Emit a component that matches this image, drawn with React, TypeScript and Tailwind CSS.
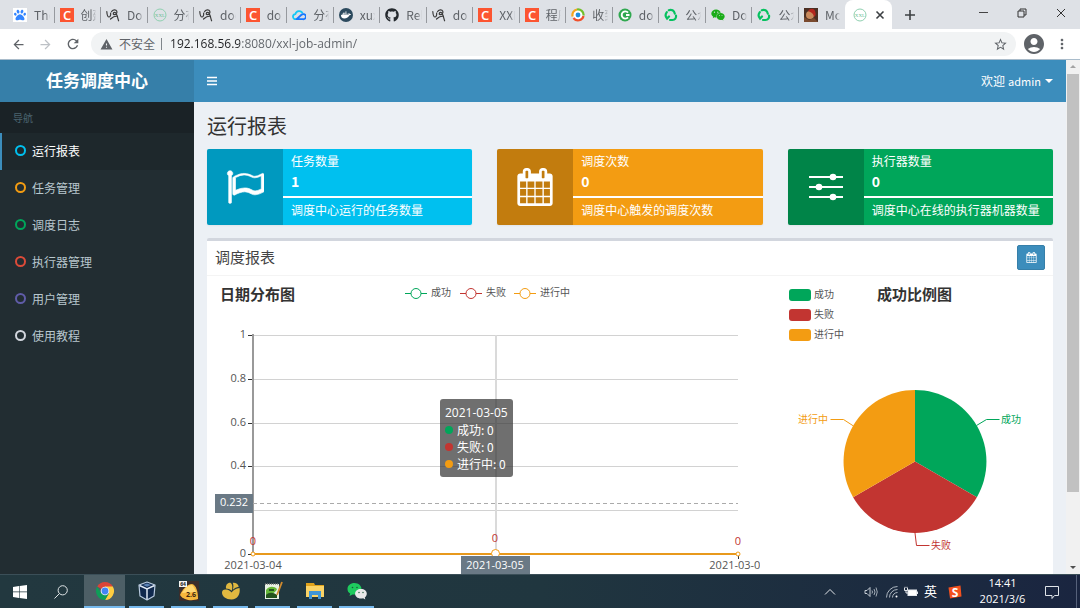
import type { ReactNode } from "react";
import { FaDocker, FaGithub, FaPaw, FaWeixin } from "react-icons/fa";
import { MdAccountCircle, MdArrowBack, MdArrowForward, MdMoreVert, MdRefresh, MdStarBorder, MdWarning } from "react-icons/md";

const GREEN = "#00a65a";
const RED = "#c23531";
const ORANGE = "#f39c12";

/* ---------- favicons ---------- */

function CIcon() {
	return (
		<svg viewBox="0 0 14 14" className="size-3.5">
			<rect width="14" height="14" fill="#fc5531" />
			<text x="7" y="11.500" textAnchor="middle" fontSize="13" fontWeight="600" fill="#fff" fontFamily="Open Sans, sans-serif">
				C
			</text>
		</svg>
	);
}

function BaiduIcon() {
	return (
		<span className="flex size-3.5 items-center justify-center bg-white">
			<FaPaw className="size-3 text-[#3385ff]" />
		</span>
	);
}

function ScriptIcon() {
	return (
		<svg viewBox="0 0 14 14" className="size-3.5" fill="none" stroke="#3c3c3c" strokeWidth="1.200" strokeLinecap="round">
			<path d="M.800 3.500c.2 3 1 5.500 2.200 5.500S5 7 4.600 5" />
			<path d="M5.500 3.800C6.500 1.500 10 1.200 10.800 3.200c.6 2-1 3.800-2.800 3.400-1.400-.5-.8-2.200.6-2.200 2.200 0 2.600 4 4 8.400M4.500 11c2-2 4.500-3 7-3" />
		</svg>
	);
}

function XxlIcon() {
	return (
		<svg viewBox="0 0 14 14" className="size-3.5">
			<circle cx="7" cy="7" r="6" fill="none" stroke="#8fd0b0" />
			<text x="7" y="8.800" textAnchor="middle" fontSize="5" fill="#6fbf98" fontFamily="Liberation Serif, serif">
				XXL
			</text>
		</svg>
	);
}

function CloudIcon() {
	return (
		<svg viewBox="0 0 14 14" className="size-3.5" fill="none" strokeWidth="1.800" strokeLinejoin="round">
			<path d="M4.500 11.200H3.600a2.500 2.500 0 0 1-.2-5A3.800 3.800 0 0 1 10.700 5.500" stroke="#16c8f5" />
			<path d="M4.500 11.200l5-4.400a2.600 2.600 0 1 1 1.300 4.400z" stroke="#1a78ff" />
		</svg>
	);
}

function DockerIcon() {
	return (
		<span className="flex size-3.5 items-center justify-center rounded-full bg-[#2c4a5e]">
			<FaDocker className="size-2.5 text-white" />
		</span>
	);
}

function SwirlIcon() {
	return (
		<svg viewBox="0 0 14 14" className="size-3.5" fill="none" strokeWidth="2.200">
			<circle cx="7" cy="7" r="5" fill="#fff" />
			<path d="M1.600 8.500A5.600 5.600 0 0 1 6 1.500" stroke="#f7a51c" />
			<path d="M6 1.500a5.600 5.600 0 0 1 6.600 6" stroke="#72bf2c" />
			<path d="M12.500 8a5.600 5.600 0 0 1-10 2" stroke="#f0502c" />
			<circle cx="7" cy="7" r="2.400" fill="#1f8fe0" />
		</svg>
	);
}

function GreenCIcon() {
	return (
		<svg viewBox="0 0 14 14" className="size-3.5">
			<circle cx="7" cy="7" r="6.500" fill="#2fa84f" />
			<path d="M10 4.600A3.600 3.600 0 1 0 10 9.400M8 7h3.500" fill="none" stroke="#fff" strokeWidth="1.900" />
		</svg>
	);
}

function RecycleIcon() {
	return (
		<svg viewBox="0 0 14 14" className="size-3.5" fill="none" stroke="#07c160" strokeWidth="2.200" strokeLinecap="round">
			<path d="M4.800 2.200C7.500 1 10.200 2.600 10.800 5.600" />
			<path d="M12 7.500c.5 2.500-1 4.500-3.500 4.500H6" />
			<path d="M2.800 4.200c-1.500 2-1.500 4.500.2 6.400L5 8.500" />
		</svg>
	);
}

function PortraitIcon() {
	return (
		<svg viewBox="0 0 14 14" className="size-3.5">
			<rect width="14" height="14" fill="#4b3024" />
			<circle cx="6" cy="7" r="4" fill="#c98a5c" />
			<path d="M4 3c2-3 6-3 7 0s1 5-1 6C10 6 7 4 4 3z" fill="#b3261e" />
			<path d="M0 14V9l5 3 5-2 4 4z" fill="#7a4a2e" />
		</svg>
	);
}

const tabs: { title: string; icon: ReactNode }[] = [
	{ title: "The", icon: <BaiduIcon /> },
	{ title: "创建", icon: <CIcon /> },
	{ title: "Doc", icon: <ScriptIcon /> },
	{ title: "分布", icon: <XxlIcon /> },
	{ title: "doc", icon: <ScriptIcon /> },
	{ title: "doc", icon: <CIcon /> },
	{ title: "分布", icon: <CloudIcon /> },
	{ title: "xux", icon: <DockerIcon /> },
	{ title: "Rel", icon: <FaGithub className="size-3.5 text-[#24292e]" /> },
	{ title: "doc", icon: <ScriptIcon /> },
	{ title: "XXL", icon: <CIcon /> },
	{ title: "程序", icon: <CIcon /> },
	{ title: "收到", icon: <SwirlIcon /> },
	{ title: "doc", icon: <GreenCIcon /> },
	{ title: "公众", icon: <RecycleIcon /> },
	{ title: "Doc", icon: <FaWeixin className="size-3.5 text-[#1aad19]" /> },
	{ title: "公众", icon: <RecycleIcon /> },
	{ title: "Mo", icon: <PortraitIcon /> },
];

/* ---------- browser chrome ---------- */

function TabStrip() {
	return (
		<div className="flex h-[29px] shrink-0 bg-[#dee1e6] pl-2">
			<div className="grid min-w-0 flex-1 grid-cols-19">
				{tabs.map((tab, i) => (
					<button key={i} type="button" className="flex min-w-0 items-center pl-[5px] text-xs text-[#5f6368]">
						<span className="shrink-0">{tab.icon}</span>
						<span className="ml-[7px] min-w-0 flex-1 overflow-hidden text-left whitespace-nowrap mask-r-from-70%">{tab.title}</span>
						<span className={i === tabs.length - 1 ? "ml-1 h-4 w-px" : "ml-1 h-4 w-px bg-[#96999e]"} />
					</button>
				))}
				<div className="flex min-w-0 items-center justify-center gap-2 rounded-t-lg bg-white">
					<XxlIcon />
					<button type="button" aria-label="关闭标签页">
						<svg viewBox="0 0 10 10" className="size-2.5" stroke="#3c4043" strokeWidth="1.600">
							<path d="M1.500 1.500l7 7M8.500 1.500l-7 7" />
						</svg>
					</button>
				</div>
			</div>
			<div className="flex w-[188px] shrink-0 items-center">
				<button type="button" aria-label="新标签页" className="flex w-9 justify-center">
					<svg viewBox="0 0 12 12" className="size-3" stroke="#3c4043" strokeWidth="1.600">
						<path d="M6 1v10M1 6h10" />
					</svg>
				</button>
				<div className="ml-auto flex pb-1">
					<button type="button" aria-label="最小化" className="flex w-[39px] justify-center">
						<svg viewBox="0 0 10 10" className="size-2.5" stroke="#444">
							<path d="M1 4.500h9" />
						</svg>
					</button>
					<button type="button" aria-label="还原" className="flex w-[39px] justify-center">
						<svg viewBox="0 0 10 10" className="size-2.5" stroke="#333" fill="none">
							<path d="M1 3h6v6H1zM3 3V1h6v6H7" />
						</svg>
					</button>
					<button type="button" aria-label="关闭" className="flex w-[39px] justify-center">
						<svg viewBox="0 0 10 10" className="size-2.5" stroke="#333">
							<path d="M1 1l8 8M9 1L1 9" />
						</svg>
					</button>
				</div>
			</div>
		</div>
	);
}

function Toolbar() {
	return (
		<div className="flex h-[31px] shrink-0 items-center border-b border-[#a9bccb] bg-white pr-2.5 pl-[11px] text-[#5f6368]">
			<button type="button" aria-label="后退">
				<MdArrowBack className="size-[15px]" />
			</button>
			<button type="button" aria-label="前进" className="ml-3 text-[#bdc1c6]">
				<MdArrowForward className="size-[15px]" />
			</button>
			<button type="button" aria-label="刷新" className="ml-3">
				<MdRefresh className="size-4" />
			</button>
			<div className="ml-2.5 flex h-6 min-w-0 flex-1 items-center rounded-full bg-[#f1f3f4] pr-2 pl-[9px]">
				<MdWarning className="size-[13px] shrink-0" />
				<span className="ml-1.5 shrink-0 text-xs">不安全</span>
				<span className="ml-1.5 h-3 w-px shrink-0 bg-[#80868b]" />
				<input
					type="text"
					aria-label="地址"
					defaultValue="192.168.56.9:8080/xxl-job-admin/"
					className="ml-2 min-w-0 flex-1 bg-linear-to-r from-[#202124] from-[70px] to-[#5f6368] to-[70px] bg-clip-text font-[Open_Sans,sans-serif] text-xs text-transparent outline-none"
				/>
				<MdStarBorder className="size-[15px] shrink-0" />
			</div>
			<MdAccountCircle className="ml-1.5 size-6" />
			<button type="button" aria-label="菜单" className="ml-2">
				<MdMoreVert className="size-4" />
			</button>
		</div>
	);
}

/* ---------- admin page ---------- */

const menu = [
	{ title: "运行报表", ring: "border-[#00c0ef]", active: true },
	{ title: "任务管理", ring: "border-[#f39c12]" },
	{ title: "调度日志", ring: "border-[#00a65a]" },
	{ title: "执行器管理", ring: "border-[#dd4b39]" },
	{ title: "用户管理", ring: "border-[#605ca8]" },
	{ title: "使用教程", ring: "border-[#d2d6de]" },
];

function Sidebar() {
	return (
		<aside className="w-[194px] shrink-0 bg-[#222d32]">
			<a href="#" className="flex h-[42px] items-center justify-center bg-[#367fa9] pb-0.5 text-[17px] font-bold text-white">
				任务调度中心
			</a>
			<div className="flex h-[31px] items-center bg-[#1a2226] pl-[13px] text-[10px] text-[#4b646f]">导航</div>
			<nav>
				{menu.map((item) => (
					<a
						key={item.title}
						href="#"
						className={
							item.active
								? "flex h-[37px] items-center gap-1.5 border-l-2 border-[#3c8dbc] bg-[#1e282c] pb-0.5 pl-[13px] text-xs text-white"
								: "flex h-[37px] items-center gap-1.5 border-l-2 border-transparent pb-0.5 pl-[13px] text-xs text-[#b8c7ce]"
						}
					>
						<span className={`size-[11px] rounded-full border-2 ${item.ring}`} />
						{item.title}
					</a>
				))}
			</nav>
		</aside>
	);
}

function CalendarIcon({ className }: { className: string }) {
	return (
		<svg viewBox="0 0 1792 1792" fill="currentColor" className={className}>
			<path d="M192 1664h288v-288h-288v288zM544 1664h320v-288h-320v288zM192 1312h288v-320h-288v320zM544 1312h320v-320h-320v320zM192 928h288v-288h-288v288zM928 1664h320v-288h-320v288zM544 928h320v-288h-320v288zM1312 1664h288v-288h-288v288zM928 1312h320v-320h-320v320zM576 448v-288q0-13-9.500-22.500t-22.500-9.500h-64q-13 0-22.500 9.500t-9.500 22.500v288q0 13 9.500 22.500t22.500 9.500h64q13 0 22.500-9.500t9.500-22.500zM1312 1312h288v-320h-288v320zM928 928h320v-288h-320v288zM1312 928h288v-288h-288v288zM1344 448v-288q0-13-9.500-22.500t-22.500-9.500h-64q-13 0-22.500 9.500t-9.500 22.500v288q0 13 9.500 22.500t22.500 9.500h64q13 0 22.500-9.500t9.500-22.500zM1728 384v1280q0 52-38 90t-90 38h-1408q-52 0-90-38t-38-90v-1280q0-52 38-90t90-38h128v-96q0-66 47-113t113-47h64q66 0 113 47t47 113v96h384v-96q0-66 47-113t113-47h64q66 0 113 47t47 113v96h128q52 0 90 38t38 90z" />
		</svg>
	);
}

function FlagIcon() {
	return (
		<svg viewBox="0 0 1792 1792" fill="currentColor" stroke="currentColor" strokeWidth="30" className="size-[38px]">
			<path d="M1664 987v-616q-169 91-306 91-82 0-145-32-100-49-184-76.500t-178-27.500q-173 0-403 127v599q245-113 433-113 55 0 103.500 7.500t98 26 77 31 82.500 39.500l28 14q44 22 101 22 120 0 293-92zM320 256q0 35-17.500 64t-46.500 46v1266q0 14-9 23t-23 9h-64q-14 0-23-9t-9-23v-1266q-29-17-46.500-46t-17.500-64q0-53 37.500-90.500t90.500-37.500 90.500 37.500 37.500 90.500zM1792 320v763q0 39-35 57-10 5-17 9-218 116-369 116-88 0-158-35l-28-14q-64-33-99-48t-91-29-114-14q-102 0-235.500 44t-228.500 102q-15 9-33 9-16 0-32-8-32-19-32-56v-742q0-35 31-55 35-21 78.500-42.500t114-52 152.500-49.500 155-19q112 0 209 31t209 86q38 19 89 19 122 0 310-112 22-12 31-17 31-16 62 2 31 20 31 55z" />
		</svg>
	);
}

function SlidersIcon() {
	return (
		<svg viewBox="0 0 34 28" className="h-7 w-[34px]" stroke="#fff" strokeWidth="2" fill="#fff">
			<path d="M0 4h34M0 14h34M0 24h34" />
			<g stroke="none">
				<circle cx="24" cy="4" r="3.300" />
				<circle cx="10" cy="14" r="3.300" />
				<circle cx="24" cy="24" r="3.300" />
			</g>
		</svg>
	);
}

type InfoBoxProps = { title: string; value: number; note: string; color: string; icon: ReactNode };

function InfoBox({ title, value, note, color, icon }: InfoBoxProps) {
	return (
		<div className={`flex h-[76px] overflow-hidden rounded-xs text-xs text-white shadow-xs ${color}`}>
			<div className="flex w-[76px] shrink-0 items-center justify-center bg-black/20">{icon}</div>
			<div className="min-w-0 flex-1 pt-[3px]">
				<div className="px-2 leading-[18px]">{title}</div>
				<div className="mb-1 px-2 text-sm leading-[22px] font-bold">{value}</div>
				<div className="h-0.5 bg-white" />
				<div className="px-2 leading-6 whitespace-nowrap">{note}</div>
			</div>
		</div>
	);
}

// the 0.2 line carries no label: the pointer's value badge takes its place
const yTicks = [
	{ label: "1", y: 59 },
	{ label: "0.8", y: 103 },
	{ label: "0.6", y: 147 },
	{ label: "0.4", y: 190 },
	{ label: "", y: 234 },
	{ label: "0", y: 278 },
];

const lineLegend = [
	{ label: "成功", color: GREEN, x: 190 },
	{ label: "失败", color: RED, x: 245 },
	{ label: "进行中", color: ORANGE, x: 299 },
];

const tooltipRows = [
	{ label: "成功", dot: "bg-[#00a65a]" },
	{ label: "失败", dot: "bg-[#c23531]" },
	{ label: "进行中", dot: "bg-[#f39c12]" },
];

function LineChart() {
	return (
		<div className="relative">
			<svg viewBox="0 0 545 340" className="block w-full" fontSize="10" fill="#555">
				<text x="5" y="24" fontSize="15" fontWeight="bold" fill="#333">
					日期分布图
				</text>
				{lineLegend.map((item) => (
					<g key={item.label}>
						<path d={`M${item.x} 17.500h22`} stroke={item.color} />
						<circle cx={item.x + 11} cy="17.500" r="5" fill="#fff" stroke={item.color} />
						<text x={item.x + 26} y="20">
							{item.label}
						</text>
					</g>
				))}
				{yTicks.map((tick) => (
					<g key={tick.y}>
						<path d={`M38 ${tick.y + 0.5}h485`} stroke="#d2d2d2" />
						<path d={`M33 ${tick.y + 0.5}h5`} stroke="#333" />
						{tick.label && (
							<text x="31" y={tick.y + 3} textAnchor="end" fontSize="11" className="font-[Open_Sans,sans-serif]">
								{tick.label}
							</text>
						)}
					</g>
				))}
				<path d="M38 58v222" stroke="#999" strokeWidth="2" />
				<path d="M281 59v219" stroke="#dadada" strokeWidth="2" />
				<path d="M38 227.500h485" stroke="#aaa" strokeDasharray="4 3" />
				<path d="M38 278h485" stroke="#e8991c" strokeWidth="2" />
				<path d="M523.500 278v5" stroke="#333" />
				<g fill="#fff" stroke={ORANGE}>
					<circle cx="38" cy="278" r="2" />
					<circle cx="280.500" cy="277.500" r="4" />
					<circle cx="523" cy="278" r="2" />
				</g>
				<g textAnchor="middle" fontSize="11" className="font-[Open_Sans,sans-serif]">
					<g fill={RED}>
						<text x="38" y="269">0</text>
						<text x="280" y="266">0</text>
						<text x="523" y="269">0</text>
					</g>
					<text x="38" y="293">2021-03-04</text>
					<text x="523" y="293">2021-03-06</text>
					<g fill="#6a7985">
						<rect y="218" width="38" height="19" />
						<rect x="246" y="280" width="69" height="19" />
					</g>
					<g fill="#fff">
						<text x="19" y="230">0.232</text>
						<text x="280" y="293">2021-03-05</text>
					</g>
				</g>
			</svg>
			<div className="absolute top-[123px] left-[225px] rounded-[3px] bg-[#323232]/70 px-[5px] py-[5px] text-xs leading-[17px] whitespace-nowrap text-white">
				<div className="font-[Open_Sans,sans-serif]">2021-03-05</div>
				{tooltipRows.map((row) => (
					<div key={row.label} className="flex items-center gap-1">
						<span className={`size-2 rounded-full ${row.dot}`} />
						{row.label}: 0
					</div>
				))}
			</div>
		</div>
	);
}

const pieLegend = [
	{ label: "成功", color: GREEN, y: 13 },
	{ label: "失败", color: RED, y: 33 },
	{ label: "进行中", color: ORANGE, y: 53 },
];

function PieChart() {
	return (
		<svg viewBox="0 0 285 340" className="block w-full" fontSize="10" fill="#555">
			{pieLegend.map((item) => (
				<g key={item.label}>
					<rect x="29" y={item.y} width="22" height="12" rx="3" fill={item.color} />
					<text x="54" y={item.y + 9}>
						{item.label}
					</text>
				</g>
			))}
			<text x="117" y="24" fontSize="15" fontWeight="bold" fill="#333">
				成功比例图
			</text>
			<path d="M155 185.500V114a71.500 71.500 0 0 1 61.900 107.200z" fill={GREEN} />
			<path d="M155 185.500l61.900 35.700a71.500 71.500 0 0 1-123.800 0z" fill={RED} />
			<path d="M155 185.500l-61.900 35.700A71.500 71.500 0 0 1 155 114z" fill={ORANGE} />
			<g fill="none">
				<path d="M216.500 149.500l10-6h13" stroke={GREEN} />
				<path d="M155 257l1.500 12.500h13" stroke={RED} />
				<path d="M93.500 150l-10-6.500h-13" stroke={ORANGE} />
			</g>
			<text x="241" y="147" fill={GREEN}>成功</text>
			<text x="171" y="273" fill={RED}>失败</text>
			<text x="68" y="147" textAnchor="end" fill={ORANGE}>进行中</text>
		</svg>
	);
}

function Dashboard() {
	return (
		<main className="min-w-0 flex-1 bg-[#ecf0f5]">
			<header className="flex h-[42px] items-center justify-between bg-[#3c8dbc] px-[13px] text-xs text-white">
				<button type="button" aria-label="切换导航">
					<svg viewBox="0 0 10 10" className="size-2.5" stroke="#fff" strokeWidth="1.600">
						<path d="M0 1.500h10M0 5h10M0 8.500h10" />
					</svg>
				</button>
				<button type="button" className="flex items-center">
					欢迎
					<span className="ml-[3px] text-[11px]">admin</span>
					<span className="ml-1 border-x-4 border-t-4 border-x-transparent border-t-white" />
				</button>
			</header>
			<div className="px-[13px] pt-2.5">
				<h1 className="text-xl leading-7">运行报表</h1>
				<div className="mt-[9px] grid grid-cols-3 gap-[25px]">
					<InfoBox title="任务数量" value={1} note="调度中心运行的任务数量" color="bg-[#00c0ef]" icon={<FlagIcon />} />
					<InfoBox title="调度次数" value={0} note="调度中心触发的调度次数" color="bg-[#f39c12]" icon={<CalendarIcon className="size-[38px]" />} />
					<InfoBox title="执行器数量" value={0} note="调度中心在线的执行器机器数量" color="bg-[#00a65a]" icon={<SlidersIcon />} />
				</div>
				<section className="mt-[13px] rounded-t-xs border-t-[3px] border-[#d2d6de] bg-white">
					<div className="flex h-[35px] items-center justify-between border-b border-[#f4f4f4] px-2 pb-0.5">
						<h2 className="text-[15px] text-[#444]">调度报表</h2>
						<button type="button" aria-label="选择日期" className="flex h-[25px] w-7 items-center justify-center rounded-xs border border-[#367fa9] bg-[#3c8dbc] text-white">
							<CalendarIcon className="size-[11px]" />
						</button>
					</div>
					<div className="grid grid-cols-[545fr_285fr] px-2">
						<LineChart />
						<PieChart />
					</div>
				</section>
			</div>
		</main>
	);
}

function Scrollbar() {
	return (
		<div className="flex w-3.5 shrink-0 flex-col items-center bg-[#f1f1f1] py-[5px]">
			<span className="border-x-[3px] border-b-[3px] border-x-transparent border-b-[#a3a3a3]" />
			<span className="mt-1.5 h-[83%] w-3 bg-[#c1c1c1]" />
			<span className="mt-auto border-x-[3px] border-t-[3px] border-x-transparent border-t-[#505050]" />
		</div>
	);
}

/* ---------- taskbar ---------- */

const apps: { name: string; icon: ReactNode }[] = [
	{
		name: "VirtualBox",
		icon: (
			<svg viewBox="0 0 20 20" className="size-5">
				<path d="M10 1l8 3-1 11-7 4-7-4L2 4z" fill="#10294d" stroke="#b9cbe0" strokeWidth="1.200" strokeLinejoin="round" />
				<path d="M2.500 4.500L10 8l7.500-3.500M10 8v10.500" stroke="#dfe9f5" strokeWidth="1.500" fill="none" />
				<path d="M6 4l4-1.500L14 4l-4 1.800z" fill="#5b83b5" />
			</svg>
		),
	},
	{
		name: "Cheese",
		icon: (
			<svg viewBox="0 0 20 20" className="size-5">
				<rect width="20" height="20" fill="#3b2d2b" />
				<path d="M1 14C3 9 8 3 13 3c4 1 6 7 6 15-5 2-14 2-18-4z" fill="#f6b73c" />
				<path d="M3 12c3-5 6-8 10-8 2 2 3 4 4 7z" fill="#ffd874" />
				<text x="12" y="15.500" textAnchor="middle" fontSize="7" fontWeight="bold" fill="#3b2410" fontFamily="Open Sans, sans-serif">
					2.6
				</text>
				<rect width="8" height="6" fill="#f4f4f4" />
				<text x="4" y="5" textAnchor="middle" fontSize="5" fontWeight="bold" fill="#222" fontFamily="Open Sans, sans-serif">
					64
				</text>
			</svg>
		),
	},
	{
		name: "Navicat",
		icon: (
			<svg viewBox="0 0 20 20" className="size-5" fill="#e0b840">
				<path d="M1 11.500c0-2.500 2-3.500 4.500-3 2 .3 3.500 1.200 5 3 2-2.500 4.500-4 8-4.500 1.200 6-2 11.500-8 11.500C5 18.500 1 15.500 1 11.500z" />
				<path d="M5 7.500C4.500 4 6.500 1.500 9.500 1.800c2 1.200 2.300 4.500 1.300 8C9 8.300 7 7.500 5 7.500z" />
				<path d="M11.800 1.800c3-.3 5.200 1 6 4-2.300.4-4.300 1.400-6 3 .8-2.500.8-4.800 0-7z" />
			</svg>
		),
	},
	{
		name: "Notepad++",
		icon: (
			<svg viewBox="0 0 20 20" className="size-5">
				<path d="M2 3h14v15H2z" fill="#e9f1e4" />
				<path d="M2 3h14" stroke="#777" strokeWidth="1.500" strokeDasharray="1 1" />
				<path d="M3 9c3-4 8-4 11-1-1 3-3 3-4 5s-4 4-7 2z" fill="#67b73a" />
				<path d="M3 14c3-3 7-3 11 0v3H3zM6 8h5v2H6z" fill="#24531d" />
				<path d="M19 1l-5 13" stroke="#d08a2e" strokeWidth="1.800" />
			</svg>
		),
	},
	{
		name: "文件资源管理器",
		icon: (
			<svg viewBox="0 0 20 20" className="size-5">
				<path d="M1 2h8l1 2h9v12H1z" fill="#e0a21b" />
				<path d="M1 5h18v11H1z" fill="#fbd365" />
				<path d="M4 18v-8h12v8h-3v-4H7v4z" fill="#3f94d4" />
			</svg>
		),
	},
	{
		name: "微信",
		icon: (
			<svg viewBox="0 0 20 20" className="size-5">
				<path d="M7.500 2C3.500 2 .500 4.500.500 8c0 2 1 3.500 2.700 4.500L2.500 15l3-1.500h2c4 0 7-2.300 7-5.500s-3-6-7-6z" fill="#1ecb5e" />
				<path d="M14 8c3.300 0 5.800 2 5.800 4.800 0 1.500-.8 2.800-2 3.700l.5 2-2.200-1.200c-5 1-8-1.500-8-4.500S10.700 8 14 8z" fill="#e9e9e9" />
				<g fill="#1b5b3a">
					<circle cx="5.500" cy="6.500" r=".8" />
					<circle cx="10" cy="6.500" r=".8" />
					<circle cx="12" cy="11.500" r=".7" />
					<circle cx="16" cy="11.500" r=".7" />
				</g>
			</svg>
		),
	},
];

function ChromeIcon() {
	return (
		<svg viewBox="0 0 20 20" className="size-5">
			<path d="M10 10L2.200 5.500A9 9 0 0 1 17.800 5.500z" fill="#db4437" />
			<path d="M10 10V5.500h7.800A9 9 0 0 1 10 19l4-7z" fill="#ffcd40" />
			<path d="M10 10l4 2.300L10 19A9 9 0 0 1 2.200 5.500l4 6.500z" fill="#0f9d58" />
			<circle cx="10" cy="10" r="4.300" fill="#f1f1f1" />
			<circle cx="10" cy="10" r="3.400" fill="#4285f4" />
		</svg>
	);
}

function Taskbar() {
	return (
		<footer className="flex h-[34px] shrink-0 items-stretch border-t border-[#3b4f58] bg-linear-to-r from-[#22383f] via-[#20363f] to-[#1a2540] text-white">
			<button type="button" aria-label="开始" className="flex w-10 items-center justify-center">
				<svg viewBox="0 0 14 14" className="size-3.5" fill="#fff">
					<path d="M0 2l6-1v5.600H0zM6.600.900L14 0v6.600H6.600zM0 7.300h6V13l-6-1zM6.600 7.300H14V14l-7.400-1z" />
				</svg>
			</button>
			<button type="button" aria-label="搜索" className="mr-0.5 flex w-[42px] items-center justify-center">
				<svg viewBox="0 0 14 14" className="size-3.5" fill="none" stroke="#dfe4e6">
					<circle cx="8.700" cy="5.300" r="4.600" />
					<path d="M5.400 8.600L.500 13.500" />
				</svg>
			</button>
			<button type="button" aria-label="Chrome" className="flex w-[41px] items-center justify-center border-b-2 border-[#76b9ed] bg-[#4d5f66]">
				<ChromeIcon />
			</button>
			<div className="ml-1 flex gap-[7px]">
				{apps.map((app) => (
					<button key={app.name} type="button" aria-label={app.name} className="flex w-[35px] items-center justify-center border-b-2 border-[#76b9ed]">
						{app.icon}
					</button>
				))}
			</div>
			<div className="ml-auto flex items-center">
				<svg viewBox="0 0 12 12" className="size-3" fill="none" stroke="#e3e6ea">
					<path d="M1 8.500l5-5 5 5" />
				</svg>
				<svg viewBox="0 0 14 12" className="ml-7 h-3 w-3.5" fill="none" stroke="#c4cbd3">
					<path d="M1 4.500h2l3-3v9l-3-3H1z" />
					<path d="M8 4.500q1 1.500 0 3M10 3q2 3 0 6M12 1.500q2.500 4.500 0 9" strokeWidth=".8" />
				</svg>
				<svg viewBox="0 0 12 12" className="ml-2 size-3" fill="none" stroke="#aeb7c0">
					<path d="M.500 11.500a11 11 0 0 1 11-11M3.500 11.500a8 8 0 0 1 8-8M6.500 11.500a5 5 0 0 1 5-5" />
					<circle cx="10.500" cy="10.500" r="1" fill="#fff" stroke="none" />
				</svg>
				<svg viewBox="0 0 14 12" className="ml-1.5 h-3 w-3.5" fill="none" stroke="#e6e9ed">
					<rect x="4" y="4" width="8.500" height="5.500" fill="#fff" />
					<path d="M13.500 5.500v2.500M.500 2v2.500h3V2M2 4.500v2.500h2M1 .800V2M3 .800V2" />
				</svg>
				<span className="ml-1.5 pb-0.5 text-[13px]">英</span>
				<svg viewBox="0 0 14 14" className="ml-[11px] size-3.5">
					<path d="M.500 2.500L12.500.500l1 11-11.500 2z" fill="#f4511e" />
					<text x="7" y="11.500" textAnchor="middle" fontSize="12" fontWeight="bold" fill="#fff" fontFamily="Open Sans, sans-serif">
						S
					</text>
				</svg>
				<div className="ml-3.5 w-[53px] pb-0.5 text-center font-[Open_Sans,sans-serif] text-[11px] leading-4">
					<div>14:41</div>
					<div>2021/3/6</div>
				</div>
				<button type="button" aria-label="通知" className="ml-4">
					<svg viewBox="0 0 14 14" className="block size-3.5" fill="none" stroke="#dfe3e8">
						<path d="M.500 1.500h13v9h-4l-2.500 3v-3H.500z" />
					</svg>
				</button>
				<span className="ml-[17px] h-[33px] w-px bg-[#56617a]" />
				<span className="w-[3px]" />
			</div>
		</footer>
	);
}

export default function App() {
	return (
		<div className="flex h-screen flex-col overflow-hidden bg-white font-['Noto_Sans_CJK_SC',sans-serif] text-[#333]">
			<TabStrip />
			<Toolbar />
			<div className="flex min-h-0 flex-1 overflow-hidden">
				<Sidebar />
				<Dashboard />
				<Scrollbar />
			</div>
			<Taskbar />
		</div>
	);
}
